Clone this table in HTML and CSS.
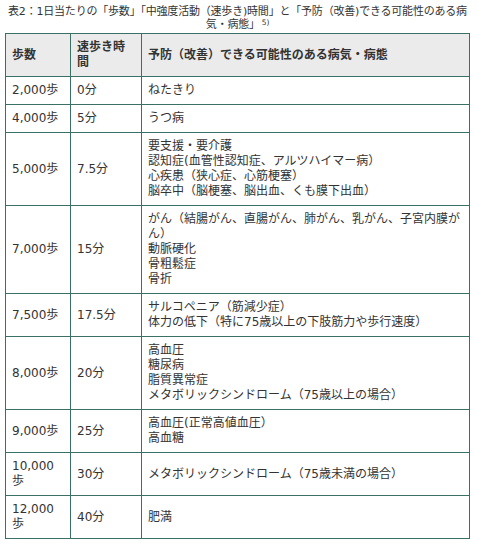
FILE: index.html
```html
<!DOCTYPE html>
<html lang="ja">
<head>
<meta charset="utf-8">
<link rel="stylesheet" href="styles.css">
</head>
<body>
<div class="wrap">
<table class="steps">
<caption>表2：1日当たりの「歩数」「中強度活動（速歩き)時間」と「予防（改善)できる可能性のある病気・病態」<sup>5)</sup></caption>
<colgroup><col class="c1"><col class="c2"><col class="c3"></colgroup>
<thead>
<tr><th>歩数</th><th>速歩き時間</th><th>予防（改善）できる可能性のある病気・病態</th></tr>
</thead>
<tbody>
<tr><td>2,000歩</td><td>0分</td><td>ねたきり</td></tr>
<tr><td>4,000歩</td><td>5分</td><td>うつ病</td></tr>
<tr><td>5,000歩</td><td>7.5分</td><td>要支援・要介護<br>認知症(血管性認知症、アルツハイマー病）<br>心疾患（狭心症、心筋梗塞）<br>脳卒中（脳梗塞、脳出血、くも膜下出血）</td></tr>
<tr><td>7,000歩</td><td>15分</td><td>がん（結腸がん、直腸がん、肺がん、乳がん、子宮内膜がん）<br>動脈硬化<br>骨粗鬆症<br>骨折</td></tr>
<tr><td>7,500歩</td><td>17.5分</td><td>サルコペニア（筋減少症）<br>体力の低下（特に75歳以上の下肢筋力や歩行速度）</td></tr>
<tr><td>8,000歩</td><td>20分</td><td>高血圧<br>糖尿病<br>脂質異常症<br>メタボリックシンドローム（75歳以上の場合）</td></tr>
<tr><td>9,000歩</td><td>25分</td><td>高血圧(正常高値血圧）<br>高血糖</td></tr>
<tr><td>10,000歩</td><td>30分</td><td>メタボリックシンドローム（75歳未満の場合）</td></tr>
<tr><td>12,000歩</td><td>40分</td><td>肥満</td></tr>
</tbody>
</table>
</div>
</body>
</html>
```

FILE: styles.css
```css
html, body {
  margin: 0;
  padding: 0;
  background: #ffffff;
}
.wrap {
  padding: 5px 7px 0 5px;
  font-family: "DejaVu Sans", "Noto Sans CJK JP", sans-serif;
  color: #333333;
}
.steps {
  width: 465px;
  table-layout: fixed;
  border-collapse: collapse;
  border: 1px solid #3b7066;
  font-size: 12px;
  line-height: 15px;
}
.steps caption {
  font-size: 11px;
  line-height: 13px;
  padding-bottom: 2px;
  text-align: center;
  letter-spacing: -0.2px;
}
.steps caption sup {
  font-size: 7.5px;
  line-height: 1;
  vertical-align: 3px;
  margin-left: 2px;
}
.c1 { width: 65px; }
.c2 { width: 71px; }
.steps th,
.steps td {
  border: 1px solid #3b7066;
  padding: 6px 6px;
  text-align: left;
  vertical-align: middle;
}
.steps th {
  background: #ebebeb;
  font-weight: bold;
}
```
